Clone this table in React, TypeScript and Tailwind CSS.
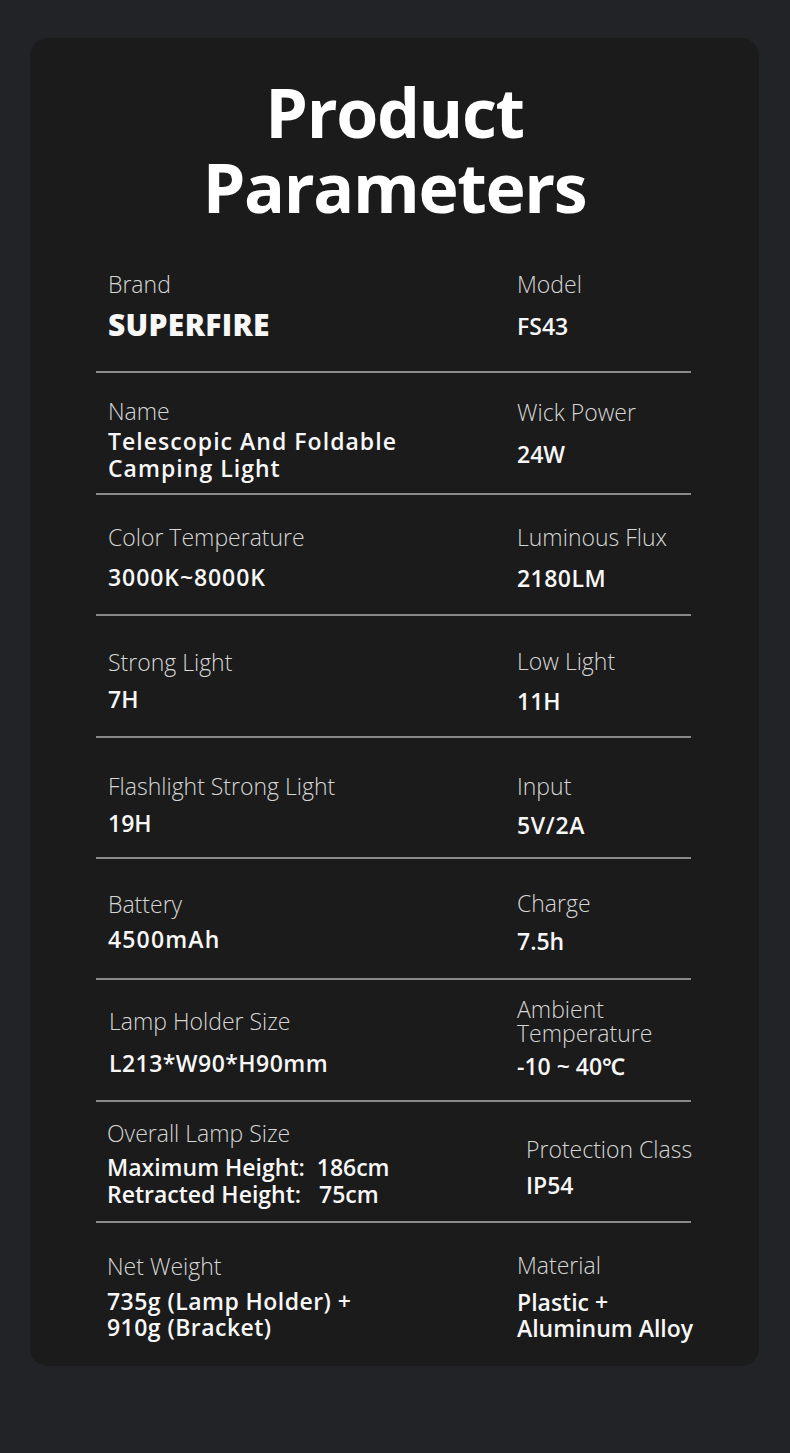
import React from 'react';

interface Cell {
  label: string[];
  value: string[];
  pt: string;
  mt: string;
  labelLeading?: string;
  valueLeading?: string;
  valueSize?: string;
  indent?: string;
}

interface Row {
  left: Cell;
  right: Cell;
}

const rows: Row[] = [
  {
    left: { label: ['Brand'], value: ['SUPERFIRE'], pt: 'pt-[18px]', mt: 'mt-[13px]', valueSize: 'text-[30px] font-extrabold tracking-[0.01em]' },
    right: { label: ['Model'], value: ['FS43'], pt: 'pt-[18px]', mt: 'mt-[14px]' },
  },
  {
    left: { label: ['Name'], value: ['Telescopic And Foldable', 'Camping Light'], pt: 'pt-[24px]', mt: 'mt-[3px]', valueLeading: 'leading-[27px] tracking-[0.045em]' },
    right: { label: ['Wick Power'], value: ['24W'], pt: 'pt-[25px]', mt: 'mt-[14px]' },
  },
  {
    left: { label: ['Color Temperature'], value: ['3000K~8000K'], pt: 'pt-[28px]', mt: 'mt-[12px]', valueLeading: 'leading-[28px] tracking-[0.04em]' },
    right: { label: ['Luminous Flux'], value: ['2180LM'], pt: 'pt-[28px]', mt: 'mt-[13px]', valueLeading: 'leading-[28px] tracking-[0.02em]' },
  },
  {
    left: { label: ['Strong Light'], value: ['7H'], pt: 'pt-[32px]', mt: 'mt-[9px]' },
    right: { label: ['Low Light'], value: ['11H'], pt: 'pt-[31px]', mt: 'mt-[12px]' },
  },
  {
    left: { label: ['Flashlight Strong Light'], value: ['19H'], pt: 'pt-[34px]', mt: 'mt-[9px]' },
    right: { label: ['Input'], value: ['5V/2A'], pt: 'pt-[34px]', mt: 'mt-[11px]', valueLeading: 'leading-[28px] tracking-[0.03em]' },
  },
  {
    left: { label: ['Battery'], value: ['4500mAh'], pt: 'pt-[31px]', mt: 'mt-[7px]', valueLeading: 'leading-[28px] tracking-[0.05em]' },
    right: { label: ['Charge'], value: ['7.5h'], pt: 'pt-[30px]', mt: 'mt-[10px]' },
  },
  {
    left: { label: ['Lamp Holder Size'], value: ['L213*W90*H90mm'], pt: 'pt-[27px]', mt: 'mt-[14px]', indent: 'pl-px', valueLeading: 'leading-[28px] tracking-[0.02em]' },
    right: { label: ['Ambient', 'Temperature'], value: ['-10 ~ 40℃'], pt: 'pt-[17px]', mt: 'mt-[7px]', labelLeading: 'leading-[24px]' },
  },
  {
    left: { label: ['Overall Lamp Size'], value: ['Maximum Height:  186cm', 'Retracted Height:   75cm'], pt: 'pt-[17px]', mt: 'mt-[7px]', valueLeading: 'leading-[27px]', indent: '-ml-px' },
    right: { label: ['Protection Class'], value: ['IP54'], pt: 'pt-[33px]', mt: 'mt-[8px]', indent: 'pl-[9px]' },
  },
  {
    left: { label: ['Net Weight'], value: ['735g (Lamp Holder) +', '910g (Bracket)'], pt: 'pt-[29px]', mt: 'mt-[8px]', valueLeading: 'leading-[26px] tracking-[0.02em]', indent: '-ml-px' },
    right: { label: ['Material'], value: ['Plastic +', 'Aluminum Alloy'], pt: 'pt-[28px]', mt: 'mt-[10px]', valueLeading: 'leading-[26px]' },
  },
];

const ParamCell: React.FC<{ cell: Cell }> = ({ cell }) => (
  <div className={`flex flex-col ${cell.pt} ${cell.indent || ''}`}>
    <div className={`text-[23px] font-light text-[#d6d6d6] whitespace-pre ${cell.labelLeading || 'leading-[28px]'}`}>
      {cell.label.map((l) => (
        <div key={l}>{l}</div>
      ))}
    </div>
    <div
      className={`${cell.mt} ${cell.valueSize || 'text-[23px] font-semibold'} text-[#f7f7f7] whitespace-pre ${cell.valueLeading || 'leading-[28px]'}`}
    >
      {cell.value.map((v) => (
        <div key={v}>{v}</div>
      ))}
    </div>
  </div>
);

export default function App() {
  return (
    <div
      className="w-[790px] h-[1453px] bg-[#222327] pt-[38px] px-[30px]"
      style={{ fontFamily: '"Open Sans", "Noto Sans", sans-serif' }}
    >
      <div className="w-[729px] h-[1328px] bg-[#1b1b1b] rounded-[18px] pt-[36px] overflow-hidden">
        <h1 className="text-center text-white text-[68px] font-bold leading-[75px] tracking-[-0.02em]">
          Product
          <br />
          Parameters
        </h1>

        {/* parameter table */}
        <div className="ml-[66px] w-[595px] mt-[28px]">
          {rows.map((row, i) => (
            <div key={i}>
              <div className={`grid grid-cols-[421px_1fr] pl-[12px] ${i === rows.length - 1 ? 'h-[144px]' : 'h-[119.4px]'}`}>
                <ParamCell cell={row.left} />
                <div className="-ml-[12px]">
                  <ParamCell cell={row.right} />
                </div>
              </div>
              {i < rows.length - 1 && <div className="h-[2px] bg-[#8a8a8a]" />}
            </div>
          ))}
        </div>
      </div>
    </div>
  );
}
